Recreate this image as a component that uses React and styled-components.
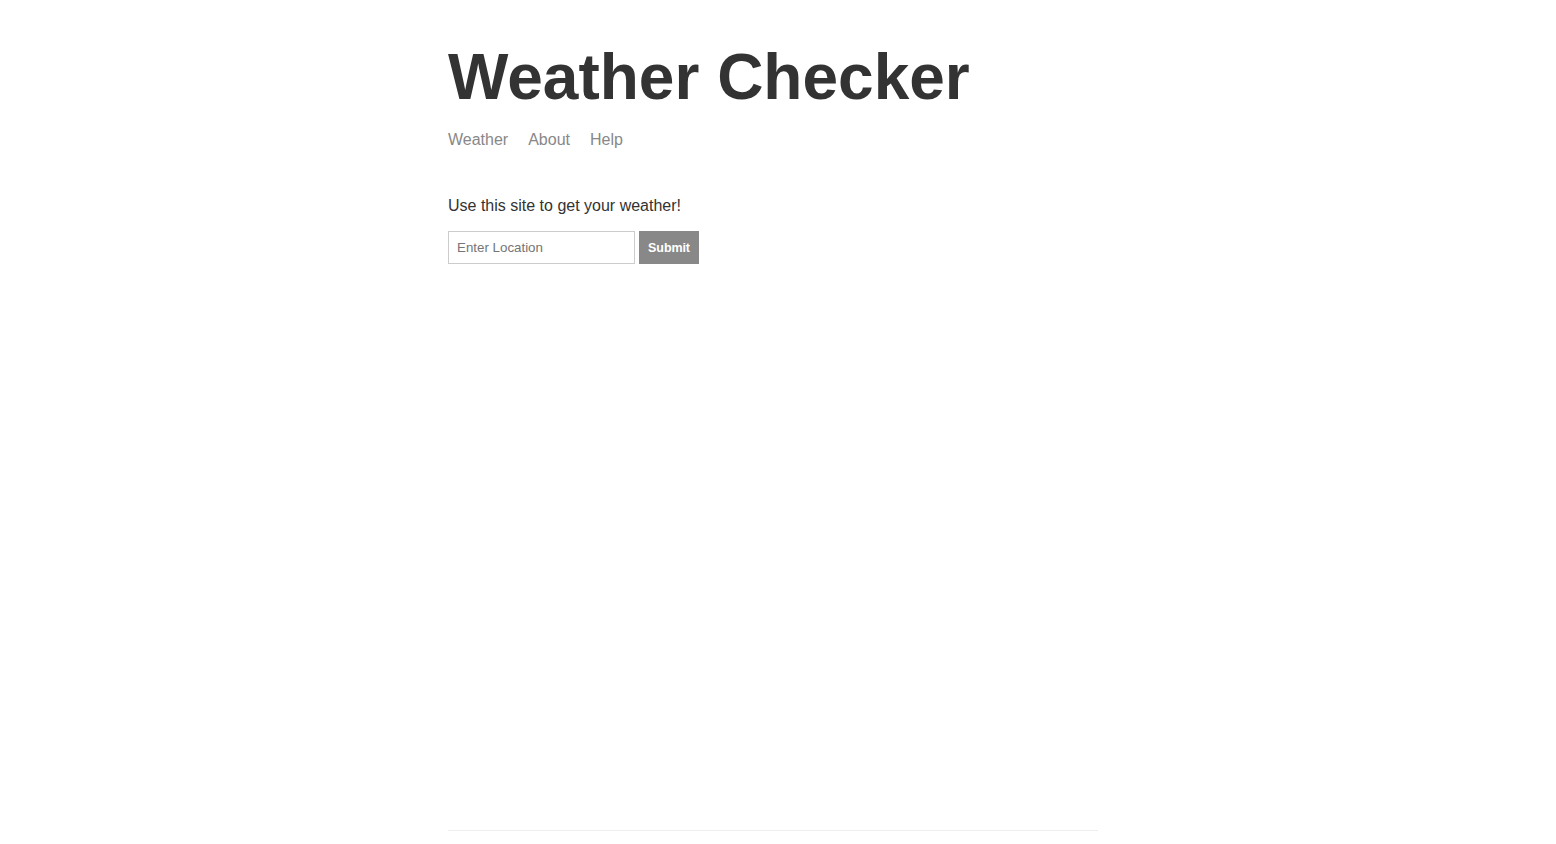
import React from "react";
import styled, { createGlobalStyle } from "styled-components";

const GlobalStyle = createGlobalStyle`
  body {
    margin: 0;
    color: #333333;
    font-family: "Liberation Sans", Arial, sans-serif;
    background: #ffffff;
  }
`;

const Page = styled.div`
  display: flex;
  flex-direction: column;
  max-width: 650px;
  min-height: 100vh;
  margin: 0 calc(50% - 330px);
`;

const Main = styled.main`
  flex-grow: 1;
`;

const Header = styled.header`
  margin-bottom: 48px;
`;

const Title = styled.h1`
  font-size: 64px;
  font-weight: bold;
  margin: 40px 0 17px;
`;

const Nav = styled.nav`
  display: flex;
  gap: 20px;
  font-size: 16px;
  line-height: 18px;
`;

const NavLink = styled.a`
  color: #888888;
  text-decoration: none;
  cursor: pointer;
`;

const Intro = styled.p`
  font-size: 16px;
  margin: 0 0 16px;
`;

const Form = styled.form`
  display: flex;
  gap: 4px;
`;

const Input = styled.input`
  box-sizing: border-box;
  width: 187px;
  height: 33px;
  border: 1px solid #cccccc;
  padding: 8px;
  font-family: "Liberation Sans", Arial, sans-serif;
  font-size: 13.33px;
  color: #333333;
  outline: none;

  &::placeholder {
    color: #757575;
  }
`;

const Button = styled.button`
  box-sizing: border-box;
  height: 33px;
  width: 60px;
  border: 1px solid #888888;
  background: #888888;
  color: #ffffff;
  padding: 0;
  font-family: "Liberation Sans", Arial, sans-serif;
  font-size: 12.5px;
  font-weight: bold;
  letter-spacing: -0.1px;
  cursor: pointer;
`;

const Footer = styled.footer`
  border-top: 1px solid #eeeeee;
  height: 13px;
`;

const App = () => {
  return (
    <Page>
      <GlobalStyle />
      <Main>
        <Header>
          <Title>Weather Checker</Title>
          <Nav>
            <NavLink href="#">Weather</NavLink>
            <NavLink href="#">About</NavLink>
            <NavLink href="#">Help</NavLink>
          </Nav>
        </Header>
        <Intro>Use this site to get your weather!</Intro>
        <Form onSubmit={(e) => e.preventDefault()}>
          <Input placeholder="Enter Location" />
          <Button type="submit">Submit</Button>
        </Form>
      </Main>
      <Footer />
    </Page>
  );
};

export default App;
